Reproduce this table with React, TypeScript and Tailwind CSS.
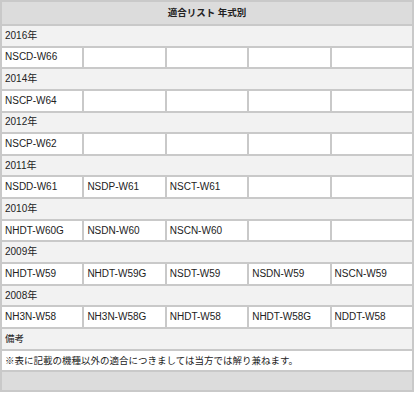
const rows: { year: string; models: string[] }[] = [
  { year: '2016年', models: ['NSCD-W66'] },
  { year: '2014年', models: ['NSCP-W64'] },
  { year: '2012年', models: ['NSCP-W62'] },
  { year: '2011年', models: ['NSDD-W61', 'NSDP-W61', 'NSCT-W61'] },
  { year: '2010年', models: ['NHDT-W60G', 'NSDN-W60', 'NSCN-W60'] },
  { year: '2009年', models: ['NHDT-W59', 'NHDT-W59G', 'NSDT-W59', 'NSDN-W59', 'NSCN-W59'] },
  { year: '2008年', models: ['NH3N-W58', 'NH3N-W58G', 'NHDT-W58', 'NHDT-W58G', 'NDDT-W58'] },
]

const cell = 'border-2 border-[#c9c9c9] px-[3px] align-middle'

export default function App() {
  return (
    <div className="w-[416px] h-[394px] bg-white text-[#222] font-['Liberation_Sans','Noto_Sans_CJK_JP',sans-serif] text-[10px] leading-none">
      <table className="w-[414px] table-fixed border-collapse">
        <tbody>
          <tr className="h-[24px] bg-[#dcdcdc]">
            <th colSpan={5} className={`${cell} text-center font-bold text-[9.5px]`}>
              適合リスト 年式別
            </th>
          </tr>
          {rows.map((r) => (
            <RowGroup key={r.year} year={r.year} models={r.models} />
          ))}
          <tr className="h-[21.65px] bg-[#f2f2f2]">
            <td colSpan={5} className={`${cell} text-left text-[9.5px]`}>備考</td>
          </tr>
          <tr className="h-[21.65px] bg-white">
            <td colSpan={5} className={`${cell} text-left text-[9.5px]`}>
              ※表に記載の機種以外の適合につきましては当方では解り兼ねます。
            </td>
          </tr>
          <tr className="h-[20px] bg-[#dcdcdc]">
            <td colSpan={5} className={cell}></td>
          </tr>
        </tbody>
      </table>
    </div>
  )
}

function RowGroup({ year, models }: { year: string; models: string[] }) {
  const filled = [...models, ...Array(5 - models.length).fill('')]
  return (
    <>
      <tr className="h-[21.65px] bg-[#f2f2f2]">
        <td colSpan={5} className={`${cell} text-left`}>{year}</td>
      </tr>
      <tr className="h-[21.65px] bg-white">
        {filled.map((m, i) => (
          <td key={i} className={`${cell} text-left`}>{m}</td>
        ))}
      </tr>
    </>
  )
}
